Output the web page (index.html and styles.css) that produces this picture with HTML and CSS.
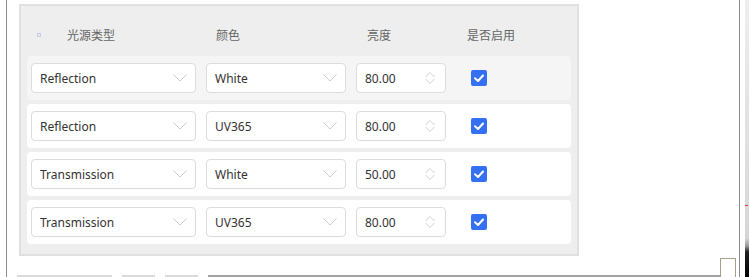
FILE: index.html
```html
<!DOCTYPE html>
<html lang="zh">
<head>
<meta charset="utf-8">
<title>光源设置</title>
<link rel="stylesheet" href="styles.css">
</head>
<body>
<div class="screen">
  <div class="gutter"></div>
  <div class="frame">
    <div class="panel">
      <div class="head">
        <div class="hcell c1"><span class="dot"></span><span>光源类型</span></div>
        <div class="hcell c2">颜色</div>
        <div class="hcell c3">亮度</div>
        <div class="hcell c4">是否启用</div>
      </div>
      <div class="rows">
        <div class="row hover">
          <div class="select"><span>Reflection</span><svg class="chev" width="14" height="8" viewBox="0 0 14 8"><polyline points="0.5,0.5 7,7 13.5,0.5"/></svg></div>
          <div class="select"><span>White</span><svg class="chev" width="14" height="8" viewBox="0 0 14 8"><polyline points="0.5,0.5 7,7 13.5,0.5"/></svg></div>
          <div class="select num"><span>80.00</span><svg class="spin" width="10" height="14" viewBox="0 0 10 14"><polyline points="0.5,6 5,1.5 9.5,6"/><polyline points="0.5,8 5,12.5 9.5,8"/></svg></div>
          <div class="check"><svg width="16" height="16" viewBox="0 0 16 16"><polyline points="4,8.2 7,11 12,5.5"/></svg></div>
        </div>
        <div class="row">
          <div class="select"><span>Reflection</span><svg class="chev" width="14" height="8" viewBox="0 0 14 8"><polyline points="0.5,0.5 7,7 13.5,0.5"/></svg></div>
          <div class="select"><span>UV365</span><svg class="chev" width="14" height="8" viewBox="0 0 14 8"><polyline points="0.5,0.5 7,7 13.5,0.5"/></svg></div>
          <div class="select num"><span>80.00</span><svg class="spin" width="10" height="14" viewBox="0 0 10 14"><polyline points="0.5,6 5,1.5 9.5,6"/><polyline points="0.5,8 5,12.5 9.5,8"/></svg></div>
          <div class="check"><svg width="16" height="16" viewBox="0 0 16 16"><polyline points="4,8.2 7,11 12,5.5"/></svg></div>
        </div>
        <div class="row">
          <div class="select"><span>Transmission</span><svg class="chev" width="14" height="8" viewBox="0 0 14 8"><polyline points="0.5,0.5 7,7 13.5,0.5"/></svg></div>
          <div class="select"><span>White</span><svg class="chev" width="14" height="8" viewBox="0 0 14 8"><polyline points="0.5,0.5 7,7 13.5,0.5"/></svg></div>
          <div class="select num"><span>50.00</span><svg class="spin" width="10" height="14" viewBox="0 0 10 14"><polyline points="0.5,6 5,1.5 9.5,6"/><polyline points="0.5,8 5,12.5 9.5,8"/></svg></div>
          <div class="check"><svg width="16" height="16" viewBox="0 0 16 16"><polyline points="4,8.2 7,11 12,5.5"/></svg></div>
        </div>
        <div class="row">
          <div class="select"><span>Transmission</span><svg class="chev" width="14" height="8" viewBox="0 0 14 8"><polyline points="0.5,0.5 7,7 13.5,0.5"/></svg></div>
          <div class="select"><span>UV365</span><svg class="chev" width="14" height="8" viewBox="0 0 14 8"><polyline points="0.5,0.5 7,7 13.5,0.5"/></svg></div>
          <div class="select num"><span>80.00</span><svg class="spin" width="10" height="14" viewBox="0 0 10 14"><polyline points="0.5,6 5,1.5 9.5,6"/><polyline points="0.5,8 5,12.5 9.5,8"/></svg></div>
          <div class="check"><svg width="16" height="16" viewBox="0 0 16 16"><polyline points="4,8.2 7,11 12,5.5"/></svg></div>
        </div>
      </div>
    </div>
    <div class="footer">
      <div class="f-space"></div>
      <div class="seg s1"></div>
      <div class="seg s2"></div>
      <div class="seg s3"></div>
      <div class="seg s4"></div>
      <div class="fbox"></div>
    </div>
  </div>
  <div class="gap"></div>
  <div class="strip"><div class="red"></div></div>
</div>
</body>
</html>
```
FILE: styles.css
```css
html, body {
  margin: 0;
  padding: 0;
}
body {
  width: 749px;
  height: 277px;
  overflow: hidden;
  background: #ffffff;
  font-family: "Noto Sans", "Noto Sans CJK SC", sans-serif;
}
.screen {
  display: flex;
  height: 277px;
}
.gutter {
  width: 6px;
  flex: none;
}
.frame {
  width: 734px;
  flex: none;
  box-sizing: border-box;
  border-left: 1px solid #8c8c8c;
  border-right: 1px solid #8c8c8c;
  display: flex;
  flex-direction: column;
}
.gap {
  width: 5px;
  flex: none;
}
.strip {
  width: 4px;
  flex: none;
  background: linear-gradient(to bottom, #eeeeee 0, #d6d6d6 238px, #9a9a9a 246px, #1e1e1e 252px, #000000 277px);
}
.red {
  margin-top: 205px;
  width: 3px;
  height: 1px;
  background: #e23b3b;
}

/* panel */
.panel {
  margin: 4px 0 0 12px;
  width: 560px;
  height: 252px;
  box-sizing: border-box;
  border: 2px solid #e0e0e0;
  background: #eeeeee;
  padding: 0 6px 10px;
}
.head {
  height: 50px;
  box-sizing: border-box;
  padding: 7px 0 0 4px;
  display: grid;
  grid-template-columns: 165px 140px 90px auto;
  column-gap: 10px;
  align-items: center;
  font-family: "Noto Sans CJK SC", sans-serif;
  font-size: 12px;
  color: #666666;
}
.c1 {
  display: flex;
  align-items: center;
  padding-left: 6px;
}
.dot {
  width: 4px;
  height: 4px;
  box-sizing: border-box;
  border: 1px solid #c9cce8;
  background: #e6e8f6;
  margin-right: 26px;
}
.c2 { padding-left: 10px; }
.c3 { padding-left: 11px; }
.c4 { padding-left: 11px; }

.rows {
  display: flex;
  flex-direction: column;
  gap: 4px;
}
.row {
  height: 44px;
  box-sizing: border-box;
  background: #ffffff;
  border-radius: 4px;
  padding-left: 4px;
  display: grid;
  grid-template-columns: 165px 140px 90px auto;
  column-gap: 10px;
  align-items: center;
}
.row.hover {
  background: #f5f5f5;
}
.select {
  height: 30px;
  box-sizing: border-box;
  border: 1px solid #dcdcdc;
  border-radius: 4px;
  background: #ffffff;
  display: flex;
  align-items: center;
  justify-content: space-between;
  padding: 0 8px 0 8px;
  font-size: 12px;
  color: #333333;
}
.num {
  padding-right: 10px;
}
.chev polyline,
.spin polyline {
  fill: none;
  stroke: #cfcfcf;
  stroke-width: 1;
}
.check {
  width: 16px;
  height: 16px;
  margin-left: 15px;
  border-radius: 2px;
  background: #3471f2;
  display: flex;
}
.check polyline {
  fill: none;
  stroke: #ffffff;
  stroke-width: 2;
  stroke-linecap: round;
  stroke-linejoin: round;
}

/* footer */
.footer {
  margin-top: auto;
  height: 19px;
  display: flex;
  align-items: flex-end;
}
.f-space { width: 10px; flex: none; }
.seg {
  height: 2px;
  flex: none;
  margin-right: 10px;
  background: #dadada;
}
.s1 { width: 95px; }
.s2 { width: 33px; }
.s3 { width: 33px; }
.s4 { width: 512px; margin-right: 0; background: #a3a3a3; }
.fbox {
  width: 16px;
  height: 19px;
  flex: none;
  box-sizing: border-box;
  border: 1px solid #a59f8f;
  border-bottom: none;
  background: #ffffff;
}
```
